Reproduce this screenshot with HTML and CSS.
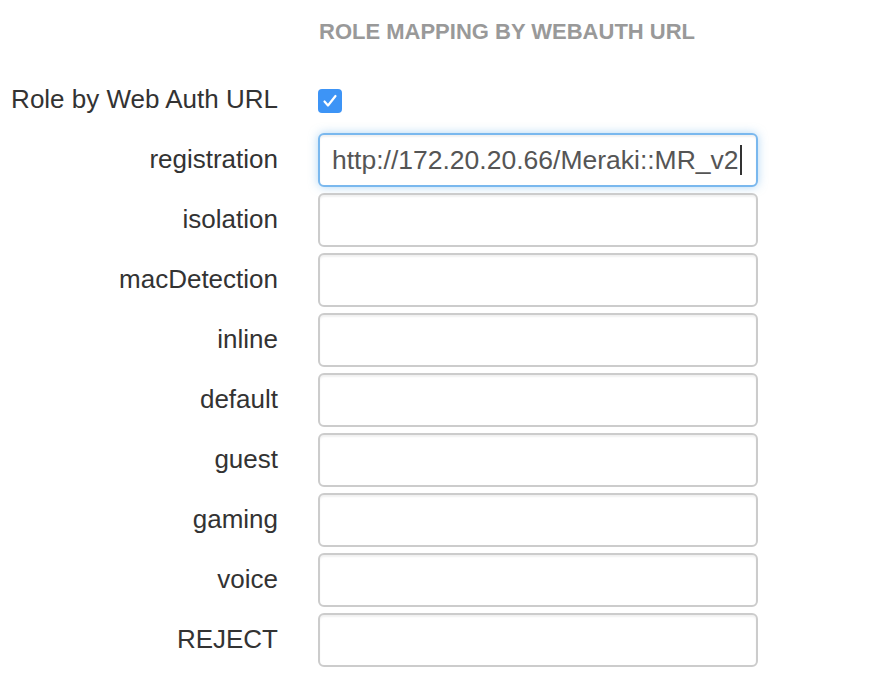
FILE: index.html
```html
<!DOCTYPE html>
<html>
<head>
<meta charset="utf-8">
<link rel="stylesheet" href="styles.css">
</head>
<body>
<form class="form">
  <div class="spacer"></div>
  <h2 class="heading">ROLE MAPPING BY WEBAUTH URL</h2>

  <label class="label">Role by Web Auth URL</label>
  <div class="check-cell">
    <span class="checkbox">
      <svg width="24" height="24" viewBox="0 0 24 24"><path d="M6.5 12.5 L10 16.5 L17.5 7" fill="none" stroke="#fff" stroke-width="2.2" stroke-linecap="round" stroke-linejoin="round"/></svg>
    </span>
  </div>

  <label class="label">registration</label>
  <div class="field focused">http://172.20.20.66/Meraki::MR_v2<span class="caret"></span></div>

  <label class="label">isolation</label>
  <div class="field"></div>

  <label class="label">macDetection</label>
  <div class="field"></div>

  <label class="label">inline</label>
  <div class="field"></div>

  <label class="label">default</label>
  <div class="field"></div>

  <label class="label">guest</label>
  <div class="field"></div>

  <label class="label">gaming</label>
  <div class="field"></div>

  <label class="label">voice</label>
  <div class="field"></div>

  <label class="label">REJECT</label>
  <div class="field"></div>
</form>
</body>
</html>
```
FILE: styles.css
```css
html, body {
  margin: 0;
  padding: 0;
  background: #fff;
}

body {
  font-family: "Liberation Sans", Arial, Helvetica, sans-serif;
  color: #333;
}

.form {
  display: grid;
  grid-template-columns: 278px 440px;
  grid-template-rows: 48px;
  grid-auto-rows: 54px;
  column-gap: 40px;
  row-gap: 6px;
  padding-top: 19px;
  margin: 0;
}

.spacer {
  height: 1px;
}

.heading {
  margin: 0;
  font-size: 22px;
  font-weight: bold;
  color: #999;
  line-height: 25px;
  height: 25px;
  align-self: start;
  padding-left: 1px;
}

.label {
  display: flex;
  align-items: center;
  justify-content: flex-end;
  font-size: 26px;
  color: #333;
  white-space: nowrap;
  padding-bottom: 2px;
}

.check-cell {
  display: flex;
  align-items: center;
}

.checkbox {
  width: 24px;
  height: 24px;
  border-radius: 4px;
  background: #3d94f6;
  display: flex;
  align-items: center;
  justify-content: center;
  margin-top: 2px;
}

.field {
  box-sizing: border-box;
  height: 54px;
  border: 2px solid #cccccc;
  border-radius: 6px;
  box-shadow: inset 0 2px 2px rgba(0, 0, 0, 0.06);
  background: #fff;
  display: flex;
  align-items: center;
  padding-left: 12px;
  font-size: 26.5px;
  color: #555;
}

.field.focused {
  border-color: #7ab8ee;
  box-shadow: inset 0 2px 2px rgba(0, 0, 0, 0.06), 0 0 10px rgba(102, 175, 233, 0.5);
}

.caret {
  display: inline-block;
  width: 2px;
  height: 30px;
  background: #333;
  margin-left: 1px;
}
```
